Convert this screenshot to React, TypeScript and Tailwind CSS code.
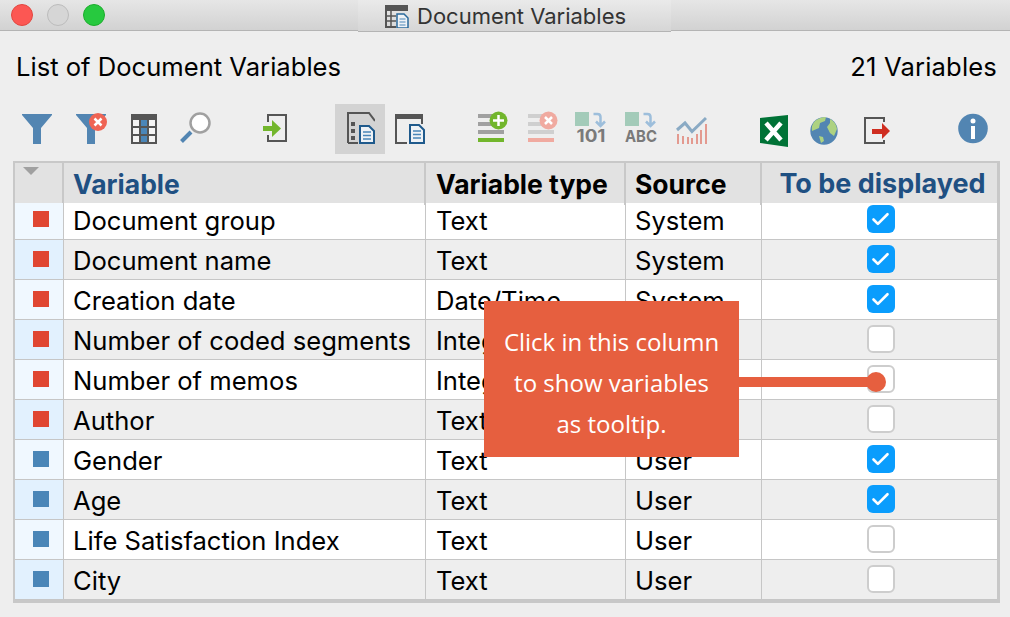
import { Check } from "lucide-react"

const rows = [
  { name: "Document group", type: "Text", source: "System", color: "bg-[#e04632]", on: true },
  { name: "Document name", type: "Text", source: "System", color: "bg-[#e04632]", on: true },
  { name: "Creation date", type: "Date/Time", source: "System", color: "bg-[#e04632]", on: true },
  { name: "Number of coded segments", type: "Integer", source: "System", color: "bg-[#e04632]", on: false },
  { name: "Number of memos", type: "Integer", source: "System", color: "bg-[#e04632]", on: false },
  { name: "Author", type: "Text", source: "System", color: "bg-[#e04632]", on: false },
  { name: "Gender", type: "Text", source: "User", color: "bg-[#4a86b8]", on: true },
  { name: "Age", type: "Text", source: "User", color: "bg-[#4a86b8]", on: true },
  { name: "Life Satisfaction Index", type: "Text", source: "User", color: "bg-[#4a86b8]", on: false },
  { name: "City", type: "Text", source: "User", color: "bg-[#4a86b8]", on: false },
]

const cols = "grid grid-cols-[49px_362px_200px_136px_235px]"

function Icon({ w, className, children }: { w: number; className?: string; children: React.ReactNode }) {
  return (
    <svg width={w} height="40" viewBox={`0 0 ${w} 40`} className={className}>
      {children}
    </svg>
  )
}

function Bars({ color, top, bottom }: { color: string; top: string; bottom: string }) {
  return (
    <>
      <g fill={color}>
        <rect x="0" y="5" width="26" height="4" />
        <rect x="0" y="13" width="26" height="4" />
        <rect x="0" y="21" width="26" height="4" />
      </g>
      <rect x="0" y="29" width="26" height="4" fill={bottom} />
      <circle cx="20.500" cy="11.500" r="9" fill={top} />
    </>
  )
}

function Toolbar() {
  return (
    <div className="flex h-[50px] items-center pl-[22px]">
      {/* filter */}
      <Icon w={30}><path d="M0 5h30v1L19 19v16h-8V19L0 6z" fill="#5285b2" /></Icon>
      {/* filter off */}
      <Icon w={31} className="ml-[24px]">
        <path d="M0 5h30v1L19 19v16h-8V19L0 6z" fill="#5285b2" />
        <circle cx="22" cy="13" r="9" fill="#ef6454" />
        <path d="M18.500 9.500l7 7m0-7l-7 7" stroke="#fff" strokeWidth="2.500" />
      </Icon>
      {/* table */}
      <Icon w={26} className="ml-[24px]">
        <rect x="0" y="5" width="26" height="30" fill="#555" />
        <g fill="#f4f4f4">
          <rect x="2" y="11" width="6" height="6" /><rect x="18" y="11" width="6" height="6" />
          <rect x="2" y="19" width="6" height="6" /><rect x="18" y="19" width="6" height="6" />
          <rect x="2" y="27" width="6" height="6" /><rect x="18" y="27" width="6" height="6" />
        </g>
        <g fill="#4a86b8">
          <rect x="10" y="11" width="6" height="6" /><rect x="10" y="19" width="6" height="6" /><rect x="10" y="27" width="6" height="6" />
        </g>
      </Icon>
      {/* search */}
      <Icon w={31} className="ml-[23px]">
        <circle cx="20" cy="14" r="9.500" fill="#fff" stroke="#a0a0a0" strokeWidth="2.500" />
        <path d="M11 23L1.500 32.500" stroke="#5285b2" strokeWidth="4" />
      </Icon>
      {/* import */}
      <Icon w={24} className="ml-[52px]">
        <path d="M5 13V6h18v26H5v-6" fill="none" stroke="#555" strokeWidth="2" />
        <rect x="0" y="17" width="12" height="5" fill="#72b62c" />
        <path d="M9 11l9 8.500-9 8.500z" fill="#72b62c" />
      </Icon>
      {/* active: all docs */}
      <div className="ml-[48px] flex h-[50px] w-[50px] items-center bg-[#d3d3d3] pl-[12px]">
        <Icon w={28}>
          <path d="M1 34V4h21l6 8" fill="none" stroke="#555" strokeWidth="2" />
          <path d="M1 34h10" stroke="#555" strokeWidth="2" />
          <g fill="#555"><rect x="4" y="13" width="4" height="4" /><rect x="4" y="20" width="4" height="4" /><rect x="4" y="27" width="4" height="4" /></g>
          <path d="M13 17h9l5 5v12H13z" fill="#eef2f6" stroke="#1f5a8c" strokeWidth="2" />
          <path d="M16 23h8M16 26.500h8M16 30h8" stroke="#4a86b8" strokeWidth="1.500" />
        </Icon>
      </div>
      {/* window docs */}
      <Icon w={30} className="ml-[10px]">
        <rect x="0" y="5" width="28" height="5" fill="#555" />
        <path d="M1 8v26h11M27 8v7" fill="none" stroke="#555" strokeWidth="2" />
        <path d="M15 16h9l5 5v13H15z" fill="#eef2f6" stroke="#1f5a8c" strokeWidth="2" />
        <path d="M18 22h8M18 25.500h8M18 29h8" stroke="#4a86b8" strokeWidth="1.500" />
      </Icon>
      {/* add variable */}
      <Icon w={30} className="ml-[53px]">
        <Bars color="#a0a0a0" top="#72b62c" bottom="#72b62c" />
        <path d="M20.500 6v11M15 11.500h11" stroke="#fff" strokeWidth="2.500" />
      </Icon>
      {/* remove variable */}
      <Icon w={30} className="ml-[20px]">
        <Bars color="#cfcfcf" top="#f0aaa0" bottom="#f0aaa0" />
        <path d="M17 8l7 7m0-7l-7 7" stroke="#fff" strokeWidth="2.500" />
      </Icon>
      {/* to integer */}
      <Icon w={32} className="ml-[17px]">
        <rect x="0" y="3" width="14" height="14" fill="#a3cbb9" />
        <path d="M18.500 5h4q3 0 3 3v8M21 12.500l4.500 4.500 4.500-4.500" fill="none" stroke="#9dbedb" strokeWidth="2.500" />
        <text x="1.500" y="33" fontFamily="Inter, sans-serif" fontWeight="700" fontSize="17" fill="#7a7a7a" textLength="29" lengthAdjust="spacingAndGlyphs">101</text>
      </Icon>
      {/* to text */}
      <Icon w={33} className="ml-[18px]">
        <rect x="0" y="3" width="14" height="14" fill="#a3cbb9" />
        <path d="M18.500 5h4q3 0 3 3v8M21 12.500l4.500 4.500 4.500-4.500" fill="none" stroke="#9dbedb" strokeWidth="2.500" />
        <text x="0" y="33" fontFamily="Inter, sans-serif" fontWeight="700" fontSize="16.500" fill="#7a7a7a" textLength="32" lengthAdjust="spacingAndGlyphs">ABC</text>
      </Icon>
      {/* stats */}
      <Icon w={31} className="ml-[18px]">
        <path d="M1 21l8-7 7 8.500L30 9" fill="none" stroke="#8aaac4" strokeWidth="3" />
        <g fill="#e39a90">
          <rect x="1" y="25" width="2" height="10" /><rect x="6" y="27" width="2" height="8" /><rect x="11" y="28" width="2" height="7" />
          <rect x="15" y="29" width="2" height="6" /><rect x="20" y="25" width="2" height="10" /><rect x="24" y="21" width="2" height="14" /><rect x="29" y="15" width="2" height="20" />
        </g>
      </Icon>
      {/* excel */}
      <Icon w={28} className="ml-[53px]">
        <path d="M0 9L28 6V38L0 34z" fill="#007236" />
        <path d="M6 14L21 31M21 14L6 31" stroke="#fff" strokeWidth="4.500" />
      </Icon>
      {/* globe */}
      <Icon w={28} className="ml-[22px]">
        <circle cx="14" cy="22" r="13.700" fill="#5285b2" />
        <path d="M5 12q5-4 11-4l-1 4-5 2-1 5-7 3q-1-6 3-10zM20 10q6 3 7 10l-3 7-4-3-3-6 3-4zM9 27l4 1 1 4-3 2z" fill="#add281" />
      </Icon>
      {/* exit */}
      <Icon w={26} className="ml-[26px]">
        <path d="M20 13V9H1v25h19v-3" fill="none" stroke="#555" strokeWidth="2" />
        <rect x="8" y="20" width="11" height="5" fill="#cf2d20" />
        <path d="M18 14l8 8-8 8z" fill="#cf2d20" />
      </Icon>
      {/* info */}
      <Icon w={30} className="ml-[68px]">
        <circle cx="15" cy="19.500" r="14.800" fill="#5285b2" />
        <circle cx="15" cy="12" r="2.500" fill="#fff" />
        <rect x="13" y="17" width="4" height="13" fill="#fff" />
      </Icon>
    </div>
  )
}

export default function App() {
  return (
    <div className="relative h-[617px] w-[1010px] overflow-hidden bg-[#eeeeee] font-['Inter',sans-serif] text-black">
      {/* Title bar */}
      <div className="flex h-[31px] items-start border-b border-[#b4b4b4] bg-gradient-to-b from-[#e6e6e6] to-[#d2d2d2]">
        <div className="flex gap-[14px] pl-[11px] pt-[4px]">
          <div className="h-[22px] w-[22px] rounded-full border border-[#e2463f] bg-[#fc5753]" />
          <div className="h-[22px] w-[22px] rounded-full border border-[#bcbcbc] bg-[#d6d6d6]" />
          <div className="h-[22px] w-[22px] rounded-full border border-[#1cad2c] bg-[#27c93f]" />
        </div>
        <div className="ml-[253px] flex h-[32px] w-[313px] items-center border-b border-[#b4b4b4] bg-gradient-to-b from-[#eaeaea] to-[#d6d6d6] pl-[27px]">
          <svg width="24" height="24" viewBox="0 0 24 24">
            <path d="M1 7v16h10" fill="none" stroke="#555" strokeWidth="2" />
            <rect x="0" y="1" width="23" height="6" fill="#555" />
            <path d="M1 12h10M1 17h10M6 7v15" stroke="#555" strokeWidth="1.500" />
            <path d="M12 10h7l4 4v10H12z" fill="#eef2f6" stroke="#2a6a9c" strokeWidth="1.500" />
            <path d="M14.500 15h6M14.500 18h6M14.500 21h6" stroke="#4a86b8" strokeWidth="1.200" />
          </svg>
          <span className="ml-[8px] text-[22px] leading-none text-[#333]">Document Variables</span>
        </div>
      </div>

      {/* Heading */}
      <div className="flex items-center justify-between px-[16px] pt-[21px] text-[25.600px] leading-[30px]">
        <span>List of Document Variables</span>
        <span className="-mr-[3px] tracking-[0.15px]">21 Variables</span>
      </div>

      <div className="mt-[22px]">
        <Toolbar />
      </div>

      {/* Table */}
      <div className="ml-[13px] mt-[7px] w-[987px] border-2 border-[#c8c8c8] border-r-[3px] border-b-[3px]">
        <div className={`${cols} h-[40px] bg-[#e2e2e2] text-[26.500px] font-bold leading-[42px]`}>
          <div className="border-r-2 border-[#c8c8c8] pl-[8px] pt-[4px]">
            <div className="h-0 w-0 border-x-[8px] border-t-[8px] border-x-transparent border-t-[#a0a0a0]" />
          </div>
          <div className="border-r-2 border-[#c8c8c8] pl-[9px] text-[#1f5082]">Variable</div>
          <div className="border-r-2 border-[#c8c8c8] pl-[10px]">Variable type</div>
          <div className="border-r-2 border-[#c8c8c8] pl-[9px]">Source</div>
          <div className="pl-[6px] text-center text-[27px] text-[#1f5082]">To be displayed</div>
        </div>
        {rows.map((row, i) => (
          <div
            key={row.name}
            className={`${cols} ${i === 0 ? "h-[37px] grid-rows-[36px] leading-[36px]" : "h-[40px] grid-rows-[39px] leading-[42px]"} border-b border-[#c6c6c6] text-[25.600px] ${i % 2 === 0 ? "bg-white" : "bg-[#eeeeee]"}`}
          >
            <div className={`flex items-center border-r border-[#c6c6c6] pl-[18px] ${i % 2 === 0 ? "bg-[#f0f8ff]" : "bg-[#e2f1fe]"}`}>
              <div className={`${i === 0 ? "mb-[4px]" : "mb-[1px]"} h-[16px] w-[16px] ${row.color}`} />
            </div>
            <div className="truncate border-r border-[#c6c6c6] pl-[9px]">{row.name}</div>
            <div className="border-r border-[#c6c6c6] pl-[10px]">{row.type}</div>
            <div className="border-r border-[#c6c6c6] pl-[9px]">{row.source}</div>
            <div className="flex items-center justify-center pl-[2px]">
              {row.on ? (
                <div className={`${i === 0 ? "mb-[4px]" : "mb-[1px]"} flex h-[28px] w-[28px] items-center justify-center rounded-[6px] bg-[#0a9dfd]`}>
                  <Check className="h-[21px] w-[21px] text-white" strokeWidth={3} />
                </div>
              ) : (
                <div className="mb-[1px] h-[28px] w-[28px] rounded-[6px] border-2 border-[#cdcdcd] bg-white" />
              )}
            </div>
          </div>
        ))}
      </div>

      {/* Callout */}
      <div className="absolute left-[484px] top-[301px] flex h-[156px] w-[255px] items-center justify-center bg-[#e65f3f] pt-[6px] text-center font-['Open_Sans',sans-serif] text-[24px] leading-[41px] text-white">
        <p>Click in this column<br />to show variables<br />as tooltip.</p>
      </div>
      <div className="absolute left-[739px] top-[377px] h-[10px] w-[130px] bg-[#e65f3f]" />
      <div className="absolute left-[866px] top-[372px] h-[20px] w-[20px] rounded-full bg-[#e65f3f]" />
    </div>
  )
}
